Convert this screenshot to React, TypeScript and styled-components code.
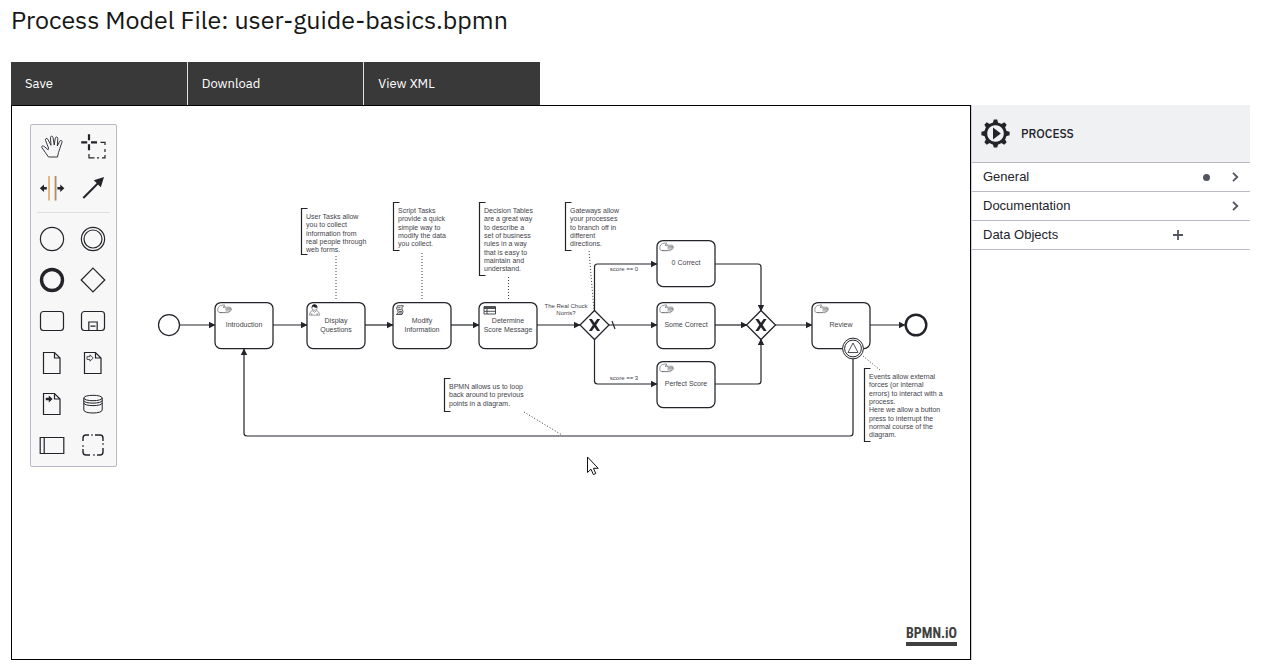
import React from "react";
import styled, { createGlobalStyle } from "styled-components";

const INK = "#22242a";
const LINE = "#b9b9c8";
const UI = '"Liberation Sans", Arial, sans-serif';
const BRAND = '"IBM Plex Sans", Roboto, sans-serif';

const GlobalStyle = createGlobalStyle`
  *, *::before, *::after { box-sizing: border-box; }
  body { margin: 0; background: #fff; color: #161616; font-family: ${UI}; }
  button { font: inherit; color: inherit; border: 0; background: none; cursor: pointer; }
`;

const Page = styled.div`
  display: flex;
  flex-direction: column;
  min-height: 100vh;
  padding: 0 17px 6px 11px;
`;

const Title = styled.h1`
  margin: 0;
  padding-top: 4px;
  height: 62px;
  font: 400 25px/32px ${BRAND};
`;

const ActionBar = styled.div`
  display: flex;
  gap: 1px;
  width: 529px;
  max-width: 100%;
  background: #e0e0e0;
`;

const ActionButton = styled.button`
  flex: 1;
  height: 43px;
  padding: 0 14px;
  background: #393939;
  color: #fff;
  text-align: left;
  font: 400 13px/18px ${BRAND};
`;

const Workspace = styled.main`
  display: flex;
  flex: 1;
`;

const Canvas = styled.section`
  position: relative;
  flex: 1;
  min-width: 0;
  min-height: 540px;
  border: 1px solid #000;
`;

const Diagram = styled.svg`
  display: block;
  position: absolute;
  inset: 0;
  width: 100%;
  height: 100%;
  font-family: ${UI};
`;

const Palette = styled.div`
  position: absolute;
  top: 18px;
  left: 18px;
  width: 87px;
  padding: 1px 2px 0 0;
  border: 1px solid ${LINE};
  border-radius: 2px;
  background: #f7f7f8;
`;

const PaletteGroup = styled.div<{ $height: number }>`
  display: grid;
  grid-template-columns: 1fr 1fr;
  grid-auto-rows: 1fr;
  height: ${(p) => p.$height}px;
`;

const PaletteRule = styled.hr`
  margin: 3px 4px 5px 6px;
  border: 0;
  border-top: 1px solid #dedee2;
`;

const Tool = styled.button`
  display: flex;
  align-items: center;
  justify-content: center;
  padding: 0;
  min-height: 0;
`;

const ToolIcon = styled.svg`
  width: 30px;
  height: 30px;
  fill: none;
  stroke: ${INK};
  stroke-width: 1.2;
`;

const Logo = styled.a`
  position: absolute;
  right: 13px;
  bottom: 13px;
  border-bottom: 4px solid #404040;
  color: #404040;
  font: 700 14px/17px "Liberation Sans Narrow", "Roboto Condensed", ${UI};
  text-decoration: none;
`;

const Properties = styled.aside`
  width: 279px;
  border-left: 1px solid #cfcfd8;
`;

const PropertiesHeader = styled.header`
  display: flex;
  align-items: center;
  gap: 11px;
  height: 58px;
  padding: 0 9px;
  border-bottom: 1px solid ${LINE};
  background: #f0f1f3;
`;

const ElementType = styled.h2`
  margin: 0;
  color: ${INK};
  font: 500 12px/16px ${BRAND};
`;

const GearIcon = styled.svg`
  width: 29px;
  height: 29px;
  fill: ${INK};
`;

const GroupRow = styled.button`
  display: flex;
  align-items: center;
  width: 100%;
  height: 29px;
  padding: 0 8px 0 11px;
  border-bottom: 1px solid ${LINE};
  color: ${INK};
  font: 400 13px/18px ${UI};
`;

const GroupName = styled.span`
  flex: 1;
  text-align: left;
`;

const Dot = styled.span`
  width: 7px;
  height: 7px;
  margin-right: 18px;
  border-radius: 50%;
  background: #52555f;
`;

const RowIcon = styled.svg<{ $end?: number }>`
  width: 14px;
  height: 14px;
  margin-right: ${(p) => p.$end ?? 0}px;
  fill: none;
  stroke: #52555f;
  stroke-width: 1.8;
`;

const page = "M6.5 4.5H17.5L23 10V25.5H6.5Z M17.5 4.5V10H23";

const creationTools: { name: string; icon: React.ReactNode }[] = [
  { name: "Create start event", icon: <circle cx="15" cy="15" r="11.6" /> },
  {
    name: "Create intermediate event",
    icon: (
      <>
        <circle cx="15" cy="15" r="11.6" />
        <circle cx="15" cy="15" r="9" />
      </>
    ),
  },
  { name: "Create end event", icon: <circle cx="15" cy="15" r="10.5" strokeWidth="3.4" /> },
  { name: "Create gateway", icon: <path d="M15 3.2L26.8 15L15 26.8L3.2 15Z" /> },
  { name: "Create task", icon: <rect x="3.5" y="5.5" width="23" height="19" rx="3" /> },
  {
    name: "Create expanded sub-process",
    icon: (
      <>
        <rect x="3.5" y="5.5" width="23" height="19" rx="3" />
        <path d="M10.8 24.5V16H19.2V24.5M12.5 20.2H17.5" />
      </>
    ),
  },
  { name: "Create data object", icon: <path d={page} /> },
  {
    name: "Create data input",
    icon: (
      <>
        <path d={page} />
        <path strokeWidth="0.8" d="M9 8.6H12V6.8L15.2 10L12 13.2V11.4H9Z" />
      </>
    ),
  },
  {
    name: "Create data output",
    icon: (
      <>
        <path d={page} />
        <path fill={INK} stroke="none" d="M8.8 8.8H11.8V6.5L15.6 10L11.8 13.5V11.2H8.8Z" />
      </>
    ),
  },
  {
    name: "Create data store",
    icon: (
      <path
        strokeWidth="1"
        d="M5.8 9V21C5.8 25 24.2 25 24.2 21V9M5.8 9C5.8 5.4 24.2 5.4 24.2 9S5.8 12.6 5.8 9M5.8 11.5C5.8 15 24.2 15 24.2 11.5M5.8 14C5.8 17.5 24.2 17.5 24.2 14"
      />
    ),
  },
  { name: "Create pool", icon: <path d="M3.2 7.5H26.8V23.5H3.2ZM7.2 7.5V23.5" /> },
  {
    name: "Create group",
    icon: (
      <path
        strokeWidth="1.4"
        d="M5 11V8Q5 5 8 5H11M13.3 5H14.7M17 5H22Q25 5 25 8V11M25 13.3V14.7M25 18V22Q25 25 22 25H19M16.7 25H15.3M12 25H8Q5 25 5 22V19M5 16.7V15.3"
      />
    ),
  },
];

const editTools: { name: string; icon: React.ReactNode }[] = [
  {
    name: "Hand tool",
    icon: (
      <path
        strokeWidth="0.9"
        strokeLinejoin="round"
        d="M11.5 25H20.5L21.5 20.5L22.8 16.5L25 10.2C25.4 8.3 23.3 7.7 22.7 9.3L20.3 14L20.8 6.5C20.8 4.7 18.6 4.5 18.3 6.2L17.2 13L16 5.4C15.6 3.6 13.3 3.9 13.4 5.8L14 13.3L10.8 7.2C9.9 5.6 7.8 6.5 8.5 8.3L11.6 16.2L11.1 17.8L7.5 14.7C6 13.3 4 14 5 15.7L8.5 20.8Z"
      />
    ),
  },
  {
    name: "Lasso tool",
    icon: (
      <>
        <path strokeWidth="2.2" d="M3.2 10.4H9.2M13 10.4H19M11 2.3V8.3M11 12.3V18.3" />
        <path d="M22.5 10.4H27V13M27 17V20M27 23V25.8H24M21 25.8H19M16.5 25.8H11V22" />
      </>
    ),
  },
  {
    name: "Space tool",
    icon: (
      <>
        <path stroke="#d6902f" strokeWidth="1.2" d="M12 3V27.5M18.2 3V27.5" />
        <path stroke="#3d5f80" strokeWidth="0.6" d="M19 3V27.5" />
        <path
          fill={INK}
          stroke="none"
          d="M2.8 15.2L7 11.5V14H9.8V16.4H7V19ZM27.4 15.2L23.2 11.5V14H20.4V16.4H23.2V19Z"
        />
      </>
    ),
  },
  {
    name: "Connect",
    icon: (
      <>
        <path strokeWidth="2" d="M5.3 25L20 10.3" />
        <path fill={INK} stroke="none" d="M26 4L22.8 14.2L15.8 7.2Z" />
      </>
    ),
  },
];

type TaskKind = "manual" | "user" | "script" | "rule";

const markers: Record<TaskKind, React.ReactNode> = {
  manual: (
    <>
      <path d="M11 5.2H8.2Q10.2 4 9.3 2.8L5.2 3.6Q2.8 5 2.8 7V9Q3.2 10.6 5 10.6H11" />
      <path d="M8.2 5.2H15.2Q16 5.8 15.2 6.4H10.5M15.2 6.4H16.2Q17.2 7 16.2 7.7H10.5M16 7.7Q16.4 8.6 15.4 9H10.5M14 9Q14.8 10.2 13.5 10.6H5" />
    </>
  ),
  user: (
    <>
      <path d="M5.2 8.5Q2.6 9.5 2.5 13.2H12.5Q12.4 9.5 9.8 8.5L7.500 10.3ZM4.8 13V11M10.2 13V11" />
      <circle cx="7.5" cy="5.6" r="2.7" />
      <path d="M4.9 5.3Q5 2.5 7.5 2.6Q10 2.5 10.1 5.3Q7.5 5.8 6.5 4.4Z" fill={INK} />
    </>
  ),
  script: (
    <path
      strokeWidth="0.8"
      d="M4.500 3.8H10.500Q8 5.800 9.200 7.500Q11 9.500 9 12.500H3.500Q6 10.500 4.800 8.700Q2.500 6.500 4.500 3.800ZM4.500 5.800H7.500M5 7.700H8.500M6 9.600H9M5.500 11H9"
    />
  ),
  rule: (
    <path strokeWidth="0.8" d="M5 4.5H16.5V12H5ZM5 6.5H16.5M5 9.3H16.5M8 6.5V12M5 5.5H16.5" />
  ),
};

const tasks: { x: number; y: number; kind: TaskKind; lines: string[] }[] = [
  { x: 215, y: 302, kind: "manual", lines: ["Introduction"] },
  { x: 307, y: 302, kind: "user", lines: ["Display", "Questions"] },
  { x: 393, y: 302, kind: "script", lines: ["Modify", "Information"] },
  { x: 479, y: 302, kind: "rule", lines: ["Determine", "Score Message"] },
  { x: 657, y: 240, kind: "manual", lines: ["0 Correct"] },
  { x: 657, y: 302, kind: "manual", lines: ["Some Correct"] },
  { x: 657, y: 361, kind: "manual", lines: ["Perfect Score"] },
  { x: 812, y: 302, kind: "manual", lines: ["Review"] },
];

const notes: { x: number; y: number; height: number; lines: string[] }[] = [
  {
    x: 301,
    y: 208,
    height: 46,
    lines: ["User Tasks allow", "you to collect", "information from", "real people through", "web forms."],
  },
  {
    x: 393,
    y: 202,
    height: 48,
    lines: ["Script Tasks", "provide a quick", "simple way to", "modify the data", "you collect."],
  },
  {
    x: 479,
    y: 202,
    height: 73,
    lines: [
      "Decision Tables",
      "are a great way",
      "to describe a",
      "set of business",
      "rules in a way",
      "that is easy to",
      "maintain and",
      "understand.",
    ],
  },
  {
    x: 565,
    y: 202,
    height: 48,
    lines: ["Gateways allow", "your processes", "to branch off in", "different", "directions."],
  },
  {
    x: 444,
    y: 378,
    height: 33,
    lines: ["BPMN allows us to loop", "back around to previous", "points in a diagram."],
  },
  {
    x: 864,
    y: 368,
    height: 73,
    lines: [
      "Events allow external",
      "forces (or internal",
      "errors) to interact with a",
      "process.",
      "Here we allow a button",
      "press to interrupt the",
      "normal course of the",
      "diagram.",
    ],
  },
];

const flows = [
  "M180 325H215",
  "M273 325H307",
  "M365 325H393",
  "M451 325H479",
  "M537 325H580",
  "M609 325H657",
  "M594.5 311V267Q594.5 264 597.5 264H657",
  "M594.5 339V381Q594.5 384 597.5 384H657",
  "M715 325H747",
  "M715 264H758Q761 264 761 267V311",
  "M715 384H758Q761 384 761 381V339",
  "M775 325H812",
  "M870 325H905",
  "M853 359V433Q853 436 850 436H247Q244 436 244 433V349",
];

const associations = [
  "M336 256V301",
  "M422 253V301",
  "M508.5 277V301",
  "M589 251L594 311",
  "M863 356L880 370",
  "M524 412L562 435",
];

const edgeLabels = [
  { x: 566, y: 308, text: "The Real Chuck" },
  { x: 566, y: 315, text: "Norris?" },
  { x: 624, y: 271, text: "score == 0" },
  { x: 624, y: 380, text: "score == 3" },
];

const LINE_STEP = 8.35;

const Shape = styled.g<{ $weight?: number }>`
  fill: #fff;
  stroke: ${INK};
  stroke-width: ${(p) => p.$weight ?? 1.25};
`;

const Marker = styled.g`
  fill: #fff;
  stroke: ${INK};
  stroke-width: 0.45;
`;

const Flow = styled.path`
  fill: none;
  stroke: ${INK};
  stroke-width: 1.2;
`;

const Association = styled.path`
  fill: none;
  stroke: ${INK};
  stroke-width: 0.9;
  stroke-dasharray: 1 2;
`;

const Label = styled.text<{ $small?: boolean; $centered?: boolean }>`
  fill: #3f3f4a;
  font-size: ${(p) => (p.$small ? 6 : 7)}px;
  text-anchor: ${(p) => (p.$centered ? "middle" : "start")};
`;

function Gateway({ x, y }: { x: number; y: number }) {
  return (
    <Shape transform={`translate(${x} ${y})`}>
      <path d="M0 -14.5L14.5 0L0 14.5L-14.5 0Z" />
      <path
        d="M-5.6 -6H-2.6L0 -2.2L2.6 -6H5.6L1.7 0L5.6 6H2.6L0 2.2L-2.6 6H-5.6L-1.7 0Z"
        fill={INK}
        stroke="none"
      />
    </Shape>
  );
}

function ProcessDiagram() {
  return (
    <Diagram role="img" aria-label="user-guide-basics process">
      <defs>
        <marker
          id="flow-end"
          markerUnits="userSpaceOnUse"
          viewBox="0 0 7 7"
          refX="6.5"
          refY="3.5"
          markerWidth="7"
          markerHeight="7"
          orient="auto"
        >
          <path d="M0.5 0.3L7 3.5L0.5 6.7Z" fill={INK} />
        </marker>
      </defs>
      <g transform="translate(-12 -106)">
        {flows.map((d) => (
          <Flow key={d} d={d} markerEnd="url(#flow-end)" />
        ))}
        <Flow d="M612 321L615 329" />
        {associations.map((d) => (
          <Association key={d} d={d} />
        ))}
        <Shape>
          <circle cx="169" cy="325" r="10.5" />
        </Shape>
        <Shape $weight={2.4}>
          <circle cx="916" cy="325" r="10.3" />
        </Shape>
        {tasks.map((t) => (
          <g key={t.lines.join(" ")} transform={`translate(${t.x} ${t.y})`}>
            <Shape>
              <rect x="0" y="0.5" width="58" height="46" rx="6" />
            </Shape>
            <Marker>{markers[t.kind]}</Marker>
            {t.lines.map((line, i) => (
              <Label key={line} $centered x="29" y={t.lines.length === 1 ? 25 : 21 + i * 9}>
                {line}
              </Label>
            ))}
          </g>
        ))}
        <Gateway x={594.5} y={325} />
        <Gateway x={761} y={325} />
        <Shape $weight={1}>
          <circle cx="853" cy="348.5" r="10.4" />
          <circle cx="853" cy="348.5" r="8.4" />
          <path d="M853 343L858 352.5H848Z" strokeWidth="0.8" />
        </Shape>
        {notes.map((n) => (
          <g key={n.lines[0]} transform={`translate(${n.x} ${n.y})`}>
            <Flow d={`M6.5 0.5H0.5V${n.height + 0.5}H6.5`} />
            {n.lines.map((line, i) => (
              <Label key={line} x="5" y={Math.round(11 + i * LINE_STEP)}>
                {line}
              </Label>
            ))}
          </g>
        ))}
        {edgeLabels.map((l) => (
          <Label key={l.text} $small $centered x={l.x} y={l.y}>
            {l.text}
          </Label>
        ))}
        <path
          d="M587.5 457V472.5L591 469.2L593.4 474.6L595.8 473.5L593.4 468.3H598.2Z"
          fill="#fff"
          stroke="#111"
          strokeWidth="1"
        />
      </g>
    </Diagram>
  );
}

const teeth = [0, 45, 90, 135, 180, 225, 270, 315];

function Gear() {
  return (
    <GearIcon viewBox="0 0 29 29" aria-hidden>
      {teeth.map((a) => (
        <path key={a} d="M11.6 5L12.8 0.4H16.2L17.4 5Z" transform={`rotate(${a} 14.5 14.5)`} />
      ))}
      <path
        fillRule="evenodd"
        d="M14.5 3.2A11.3 11.3 0 1 1 14.49 3.2ZM14.5 6.2A8.3 8.3 0 1 0 14.51 6.2Z"
      />
      <path d="M12 8.6L19.8 14.5L12 20.4Z" />
    </GearIcon>
  );
}

const Chevron = () => (
  <RowIcon viewBox="0 0 14 14" aria-hidden>
    <path d="M5 2.8L9.3 7L5 11.2" />
  </RowIcon>
);

const Plus = () => (
  <RowIcon $end={57} viewBox="0 0 14 14" aria-hidden>
    <path d="M7 2V12M2 7H12" />
  </RowIcon>
);

export default function App() {
  return (
    <Page>
      <GlobalStyle />
      <Title>Process Model File: user-guide-basics.bpmn</Title>
      <ActionBar>
        <ActionButton>Save</ActionButton>
        <ActionButton>Download</ActionButton>
        <ActionButton>View XML</ActionButton>
      </ActionBar>
      <Workspace>
        <Canvas>
          <ProcessDiagram />
          <Palette>
            <PaletteGroup $height={83}>
              {editTools.map((t) => (
                <Tool key={t.name} aria-label={t.name}>
                  <ToolIcon viewBox="0 0 30 30">{t.icon}</ToolIcon>
                </Tool>
              ))}
            </PaletteGroup>
            <PaletteRule />
            <PaletteGroup $height={248}>
              {creationTools.map((t) => (
                <Tool key={t.name} aria-label={t.name}>
                  <ToolIcon viewBox="0 0 30 30">{t.icon}</ToolIcon>
                </Tool>
              ))}
            </PaletteGroup>
          </Palette>
          <Logo href="#bpmn-io">BPMN.iO</Logo>
        </Canvas>
        <Properties>
          <PropertiesHeader>
            <Gear />
            <ElementType>PROCESS</ElementType>
          </PropertiesHeader>
          <GroupRow>
            <GroupName>General</GroupName>
            <Dot />
            <Chevron />
          </GroupRow>
          <GroupRow>
            <GroupName>Documentation</GroupName>
            <Chevron />
          </GroupRow>
          <GroupRow>
            <GroupName>Data Objects</GroupName>
            <Plus />
          </GroupRow>
        </Properties>
      </Workspace>
    </Page>
  );
}
